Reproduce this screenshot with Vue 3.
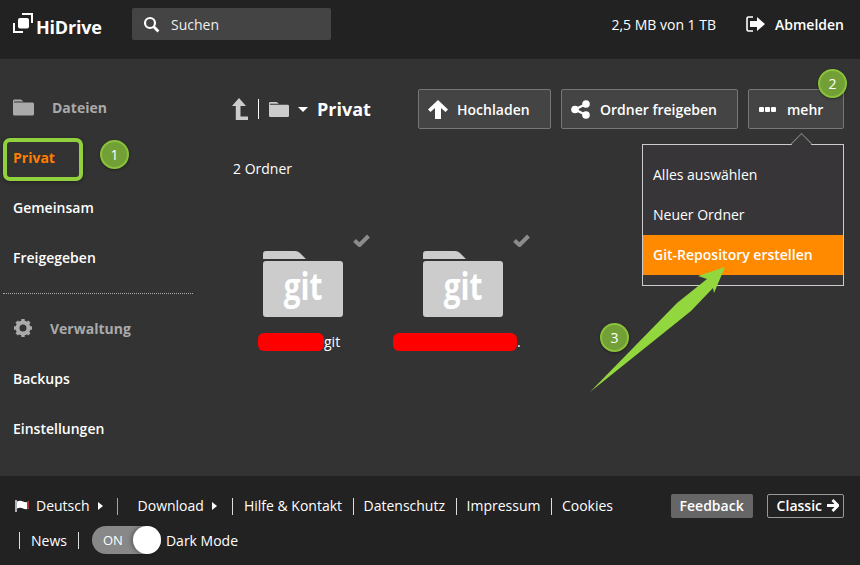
<script setup>
const nav = ['Gemeinsam', 'Freigegeben']
const folders = [
  { name: 'git', redact: 66, suffix: 'git' },
  { name: 'second', redact: 124, suffix: '.' }
]
const links = ['Hilfe & Kontakt', 'Datenschutz', 'Impressum', 'Cookies']
</script>

<template>
  <div class="app">
    <header class="top">
      <div class="logo">
        <svg width="20" height="20" viewBox="0 0 20 20">
          <path d="M9 1h10v9" fill="none" stroke="#fff" stroke-width="2" />
          <path d="M1 10v9h9" fill="none" stroke="#fff" stroke-width="2" />
          <rect x="5" y="5" width="11" height="10.500" rx="2" fill="#fff" />
        </svg>
        <span>HiDrive</span>
      </div>
      <div class="search">
        <svg width="17" height="17" viewBox="0 0 17 17">
          <circle cx="7" cy="7" r="5" fill="none" stroke="#fff" stroke-width="2.200" />
          <path d="M10.800 10.800l4.600 4.600" stroke="#fff" stroke-width="2.800" />
        </svg>
        <span>Suchen</span>
      </div>
      <div class="quota">2,5 MB von 1 TB</div>
      <div class="logout">
        <svg width="20" height="16" viewBox="0 0 20 16">
          <path d="M7 1H2.500A1.500 1.500 0 0 0 1 2.500v11A1.500 1.500 0 0 0 2.500 15H7" fill="none" stroke="#fff" stroke-width="1.600" />
          <path d="M4 5h7V1l8 7-8 7v-4H4z" fill="#fff" />
        </svg>
        <span>Abmelden</span>
      </div>
    </header>

    <main class="main">
      <aside class="side">
        <div class="side-head">
          <svg class="folder-glyph" width="21" height="17" viewBox="0 0 21 17">
            <path d="M0 2a1.500 1.500 0 0 1 1.500-1.500h6.500l2.500 2H1v1h18.500a1.500 1.500 0 0 1 1.500 1.500v10a1.500 1.500 0 0 1-1.500 1.500h-18A1.500 1.500 0 0 1 0 15z" fill="#aaa" />
          </svg>
          <span>Dateien</span>
        </div>
        <div class="side-item active">Privat</div>
        <div v-for="n in nav" :key="n" class="side-item">{{ n }}</div>
        <div class="divider"></div>
        <div class="side-head">
          <svg class="gear-glyph" width="20" height="20" viewBox="0 0 20 20">
            <circle cx="10" cy="10" r="5.500" fill="none" stroke="#aaa" stroke-width="4" />
            <path d="M10 1v18M1 10h18M3.600 3.600l12.800 12.800M16.400 3.600L3.600 16.400" stroke="#aaa" stroke-width="3.400" stroke-dasharray="3.500 11 3.500 11" />
          </svg>
          <span>Verwaltung</span>
        </div>
        <div class="side-item">Backups</div>
        <div class="side-item">Einstellungen</div>
      </aside>

      <section class="content">
        <div class="toolbar">
          <div class="crumbs">
            <svg class="up" width="16" height="22" viewBox="0 0 16 22">
              <path d="M7 0L0 8h3.800v14H16v-3.500H8.500V8H14z" fill="#ccc" />
            </svg>
            <span class="crumb-sep"></span>
            <svg width="20" height="17" viewBox="0 0 21 17">
              <path d="M0 2a1.500 1.500 0 0 1 1.500-1.500h6.500l2.500 2H1v1h18.500a1.500 1.500 0 0 1 1.500 1.500v10a1.500 1.500 0 0 1-1.500 1.500h-18A1.500 1.500 0 0 1 0 15z" fill="#ccc" />
            </svg>
            <span class="caret"></span>
            <span class="crumb-title">Privat</span>
          </div>
          <div class="actions">
            <button class="btn upload">
              <svg width="20" height="19" viewBox="0 0 20 19">
                <path d="M10 0L0 9.500l2.500 2.500L7 8v11h6V8l4.500 4 2.500-2.500z" fill="#fff" />
              </svg>
              Hochladen
            </button>
            <button class="btn share">
              <svg width="19" height="19" viewBox="0 0 19 19">
                <path d="M15 4L4 9.500 15 15" fill="none" stroke="#fff" stroke-width="2.400" />
                <circle cx="15" cy="4" r="3.800" fill="#fff" />
                <circle cx="4" cy="9.500" r="3.800" fill="#fff" />
                <circle cx="15" cy="15" r="3.800" fill="#fff" />
              </svg>
              Ordner freigeben
            </button>
            <button class="btn more">
              <span class="dots"><i></i><i></i><i></i></span>
              mehr
            </button>
            <div class="menu">
              <div class="menu-item">Alles auswählen</div>
              <div class="menu-item">Neuer Ordner</div>
              <div class="menu-item hot">Git-Repository erstellen</div>
            </div>
          </div>
        </div>

        <div class="count">2 Ordner</div>

        <div class="folders">
          <div v-for="f in folders" :key="f.name" class="folder">
            <svg class="check" width="17" height="13" viewBox="0 0 17 13">
              <path d="M1.500 6.500l5 4.500L15.500 2" fill="none" stroke="#8c8c8c" stroke-width="4" />
            </svg>
            <div class="folder-icon">
              <svg width="80" height="66" viewBox="0 0 80 66">
                <path d="M0 3a3 3 0 0 1 3-3h29q3 0 5 2l6 6H0zM0 13a3 3 0 0 1 3-3h74a3 3 0 0 1 3 3v50a3 3 0 0 1-3 3H3a3 3 0 0 1-3-3z" fill="#ccc" />
              </svg>
              <span class="git">git</span>
            </div>
            <div class="folder-name">
              <span class="redact" :style="{ width: f.redact + 'px' }"></span>{{ f.suffix }}
            </div>
          </div>
        </div>
      </section>
    </main>

    <footer class="foot">
      <div class="foot-row first">
        <svg class="flag" width="15" height="12" viewBox="0 0 15 12">
          <path d="M1 0v12" stroke="#eef" stroke-width="1.400" />
          <path d="M2 1.500q3-1.500 6 0t6 0v7q-3 1.500-6 0t-6 0z" fill="#fff" />
          <path d="M12 1.600l2-.6v7.600l-2 .6z" fill="#a33" />
        </svg>
        <span>Deutsch</span>
        <span class="tri"></span>
        <span class="sep lang-sep"></span>
        <span class="dl">Download</span>
        <span class="tri"></span>
        <span class="sep dl-sep"></span>
        <template v-for="(l, i) in links" :key="l">
          <span>{{ l }}</span>
          <span v-if="i < links.length - 1" class="sep"></span>
        </template>
        <span class="feedback">Feedback</span>
        <span class="classic">Classic
          <svg width="13" height="13" viewBox="0 0 13 13">
            <path d="M6.500 1l5.500 5.500L6.500 12M1 6.500h10" fill="none" stroke="#fff" stroke-width="2.800" />
          </svg>
        </span>
      </div>
      <div class="foot-row second">
        <span class="sep news-sep"></span>
        <span>News</span>
        <span class="sep"></span>
        <div class="toggle"><span>ON</span><i></i></div>
        <span class="dark-label">Dark Mode</span>
      </div>
    </footer>

    <!-- annotations on top of the screenshot -->
    <div class="mark"></div>
    <span class="badge b1">1</span>
    <span class="badge b2">2</span>
    <span class="badge b3">3</span>
    <svg class="arrow" width="140" height="130" viewBox="0 0 140 130">
      <path d="M1 127L88 38 118 14 109 11 136 2 125 28 124 23 102 46z" fill="#93d73f" />
    </svg>
  </div>
</template>

<style>
html, body { margin: 0; background: #333; }
</style>

<style scoped>
.app {
  position: relative;
  width: 860px;
  height: 565px;
  overflow: hidden;
  display: flex;
  flex-direction: column;
  background: #333;
  color: #fff;
  font-family: "Open Sans", "Liberation Sans", sans-serif;
  font-size: 14px;
}
.top {
  height: 59px;
  flex: none;
  box-sizing: border-box;
  padding: 0 16px 11px 13px;
  background: #222;
  display: flex;
  align-items: center;
}
.logo {
  display: flex;
  align-items: center;
  gap: 3px;
  width: 119px;
  font-size: 18px;
  font-weight: 700;
  letter-spacing: -0.2px;
}
.logo svg { margin-top: -3px; }
.logo span { margin-top: 5px; }
.search {
  width: 199px;
  height: 32px;
  box-sizing: border-box;
  padding-left: 11px;
  background: #444;
  border-radius: 2px;
  display: flex;
  align-items: center;
  gap: 11px;
  color: #eee;
}
.quota { margin-left: auto; margin-right: 1px; }
.logout {
  margin-left: 29px;
  display: flex;
  align-items: center;
  gap: 9px;
  font-weight: 600;
}
.main { flex: 1; display: flex; min-height: 0; }
.side { width: 193px; flex: none; padding-top: 24px; }
.side-head {
  height: 50px;
  box-sizing: border-box;
  padding: 0 0 2px 13px;
  display: flex;
  align-items: center;
  font-weight: 700;
  color: #aaa;
}
.folder-glyph { margin-right: 18px; }
.gear-glyph { margin-right: 17px; }
.side-item {
  height: 50px;
  line-height: 50px;
  padding-left: 13px;
  font-weight: 600;
}
.side-item.active { color: #ff7d00; font-weight: 700; }
.divider {
  height: 0;
  margin: 10px 0 10px 3px;
  border-top: 1px dotted #aaa;
}
.content { flex: 1; padding: 30px 16px 0 40px; min-width: 0; }
.toolbar { display: flex; justify-content: space-between; height: 40px; }
.crumbs { display: flex; align-items: center; gap: 9px; }
.up { margin: 0 1px 0 -1px; }
.crumb-sep { width: 1px; height: 20px; background: #fff; margin-right: 1px; }
.caret {
  border: 5px solid transparent;
  border-top-color: #fff;
  border-bottom-width: 0;
}
.crumb-title { font-size: 18px; font-weight: 700; }
.actions { position: relative; display: flex; gap: 10px; }
.btn {
  height: 40px;
  box-sizing: border-box;
  padding: 0 0 0 9px;
  background: #444;
  border: 1px solid #777;
  border-radius: 2px;
  color: #fff;
  font: 600 14px "Open Sans", "Liberation Sans", sans-serif;
  display: flex;
  align-items: center;
  gap: 9px;
}
.upload { width: 133px; }
.share { width: 177px; gap: 10px; }
.more { width: 96px; gap: 11px; padding-left: 10px; }
.dots { display: flex; gap: 1px; }
.dots i { width: 5px; height: 5px; background: #fff; border-radius: 1px; }
.menu {
  position: absolute;
  top: 55px;
  right: 0;
  width: 202px;
  box-sizing: border-box;
  padding: 10px 0;
  background: #373537;
  border: 1px solid #ccc;
  z-index: 2;
}
.menu::before {
  content: "";
  position: absolute;
  top: -9px;
  right: 34px;
  width: 15px;
  height: 15px;
  box-sizing: border-box;
  background: #373537;
  border-left: 1px solid #888;
  border-top: 1px solid #888;
  transform: rotate(45deg);
}
.menu-item {
  position: relative;
  height: 40px;
  line-height: 40px;
  padding-left: 10px;
}
.menu-item.hot { background: #ff8a00; font-weight: 600; }
.count { margin-top: 30px; height: 20px; line-height: 20px; }
.folders { display: flex; margin-top: 61px; }
.folder { position: relative; width: 160px; }
.check { position: absolute; left: 120px; top: -6px; }
.folder-icon {
  position: relative;
  margin: 11px 0 0 30px;
  width: 80px;
  height: 66px;
}
.folder-icon svg { display: block; }
.git {
  position: absolute;
  left: 0;
  right: 0;
  top: 12px;
  text-align: center;
  color: #fff;
  font: 700 38px/44px "Open Sans", sans-serif;
  transform: scaleX(.78);
}
.folder-name {
  margin-top: 16px;
  padding-left: 25px;
  height: 18px;
  line-height: 18px;
  display: flex;
  align-items: center;
}
.redact {
  display: inline-block;
  height: 18px;
  background: #f00;
  border-radius: 6px;
}
.folder + .folder .folder-name { padding-left: 0; margin-left: 0; }
.foot {
  height: 89px;
  flex: none;
  box-sizing: border-box;
  background: #222;
  padding: 18px 16px 0 15px;
}
.foot-row { display: flex; align-items: center; height: 24px; }
.first > svg { margin-right: 6px; }
.first > span:not(.feedback):not(.classic):not(.sep):not(.tri) { position: relative; top: -1px; }
.tri {
  margin-left: 8px;
  border: 4px solid transparent;
  border-left: 5px solid #fff;
  border-right-width: 0;
}
.sep {
  width: 1px;
  height: 17px;
  margin: 0 10px 0 10.5px;
  background: #ddd;
}
.lang-sep { margin: 0 20px 0 14px; background: #b9a37c; }
.dl-sep { margin: 0 11px 0 15px; }
.feedback {
  margin-left: auto;
  width: 82px;
  height: 24px;
  line-height: 24px;
  text-align: center;
  background: #666;
  border-radius: 2px;
  font-weight: 600;
}
.classic {
  margin-left: 14px;
  height: 24px;
  box-sizing: border-box;
  padding: 0 4px 2px 9px;
  border: 1px solid #999;
  border-radius: 2px;
  display: flex;
  align-items: center;
  gap: 4px;
  font-weight: 600;
}
.second { margin-top: 8px; height: 28px; }
.second .sep { margin: 0 11px; }
.second .news-sep { margin: 0 11px 0 4px; }
.toggle {
  position: relative;
  width: 69px;
  height: 28px;
  margin-left: 2px;
  background: #888;
  border-radius: 14px;
  line-height: 28px;
}
.toggle span { padding-left: 11px; font-size: 13px; }
.toggle i {
  position: absolute;
  right: 0;
  top: 0;
  width: 28px;
  height: 28px;
  border-radius: 50%;
  background: #fff;
  box-shadow: -2px 0 4px rgba(0,0,0,.3);
}
.dark-label { margin-left: 5px; }

.mark {
  position: absolute;
  left: 3px;
  top: 138px;
  width: 80px;
  height: 43px;
  box-sizing: border-box;
  border: 4px solid #92d13e;
  border-radius: 7px;
  box-shadow: 0 1px 4px rgba(0,0,0,.4);
}
.badge {
  position: absolute;
  width: 29px;
  height: 29px;
  box-sizing: border-box;
  border: 2px solid #8ac23a;
  border-radius: 50%;
  background: #73a036;
  color: #fff;
  font-size: 14px;
  line-height: 25px;
  text-align: center;
  box-shadow: 0 1px 3px rgba(0,0,0,.4);
  z-index: 3;
}
.b1 { left: 100px; top: 140px; }
.b2 { left: 818px; top: 69px; }
.b3 { left: 600px; top: 323px; }
.arrow { position: absolute; left: 589px; top: 265px; z-index: 3; }
</style>
